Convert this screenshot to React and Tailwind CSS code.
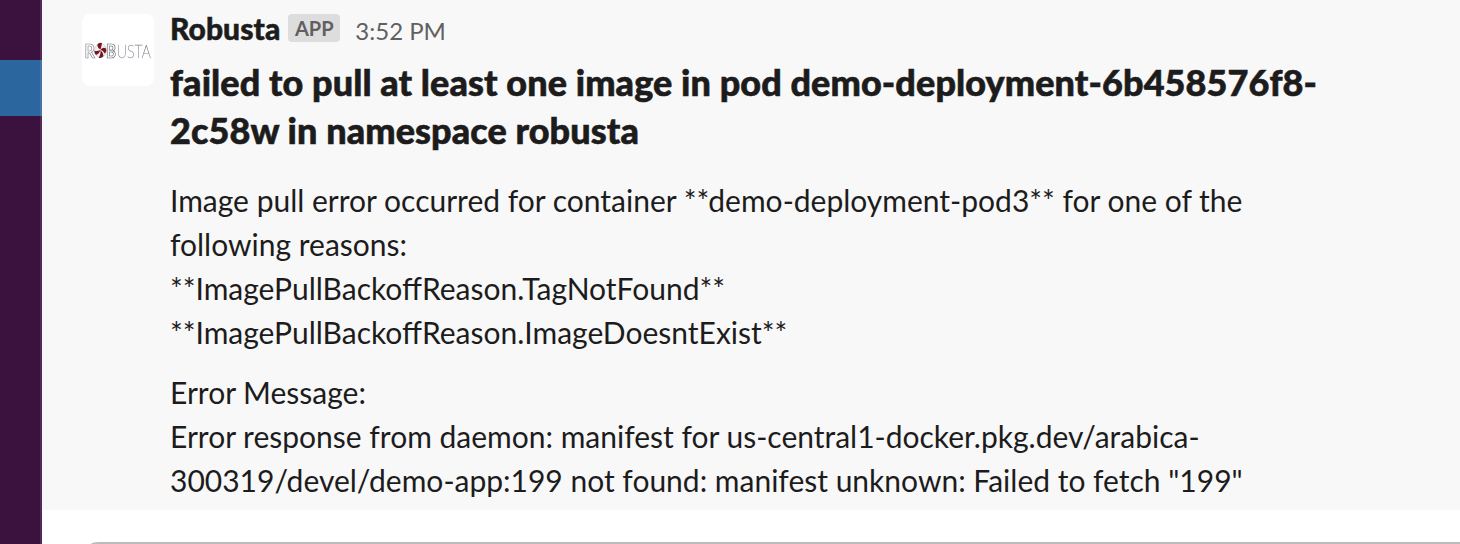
function RobustaLogo() {
  return (
    <svg viewBox="0 0 72 72" className="h-[72px] w-[72px] overflow-visible font-['Lato',sans-serif] antialiased will-change-transform" role="img" aria-label="Robusta">
      <g className="text-[18px] font-bold" fill="#ffffff" strokeWidth=".7">
        <text x="2.500" y="44" textLength="10.500" lengthAdjust="spacingAndGlyphs" stroke="#85838e">R</text>
        <text x="24" y="43.500" textLength="10" lengthAdjust="spacingAndGlyphs" stroke="#5c5968">B</text>
      </g>
      <text x="34.800" y="44" textLength="34" lengthAdjust="spacingAndGlyphs" className="text-[17px] font-thin" fill="#686672" stroke="#85838e" strokeWidth=".3">USTA</text>
      <ellipse cx="18.500" cy="36.500" rx="6" ry="7" fill="#f2edef" stroke="#c3b9bf" strokeWidth=".5" />
      <g fill="#76151f">
        <path d="M15.200 31q1.500-3 4.800-2-.500 3.500-1.500 6.500-3-1.500-3.300-4.500z" />
        <path d="M18.500 35.500q3-3 5.500-1 1 3-1.300 5-1.200-2.500-4.200-4z" />
        <path d="M18.500 36q3 3 3 6-2 2.800-5 1.800 2.500-3 2-7.800z" />
        <path d="M18.500 36q-1.300 4-4.500 5-2-1.500-1.500-4.300 3 .800 6-.700z" />
      </g>
    </svg>
  );
}

export default function App() {
  return (
    <div className="flex h-[544px] w-[1460px] overflow-hidden bg-white font-['Lato',sans-serif] text-[#1d1c1d]">
      <aside className="w-[42px] shrink-0 bg-[#3b123e] pt-[60px] shadow-[inset_-2px_0_0_#552b56]">
        <div className="h-14 w-[42px] border-r-2 border-[#4474a8] bg-[#2c669f]" />
      </aside>
      <main className="flex min-w-0 flex-1 flex-col">
        <section className="flex h-[510px] shrink-0 gap-4 bg-[#f8f8f8] pl-10">
          <div className="mt-[14px] h-[72px] w-[72px] shrink-0 rounded-lg bg-white"><RobustaLogo /></div>
          <div className="whitespace-nowrap">
            <header className="flex h-[58px] items-center">
              <span className="-mt-px text-[30px] font-black tracking-[0.06px] [-webkit-text-stroke:0.5px_#1d1c1d]">Robusta</span>
              <span className="mb-0.5 ml-2 flex h-7 w-[52px] items-center justify-center rounded bg-[#dddddd] text-[20px] font-bold text-[#616061]">APP</span>
              <time className="mt-[3px] ml-[15px] text-[24px] text-[#616061]">3:52 PM</time>
            </header>
            <h1 className="text-[36px] leading-[48px] font-black tracking-[0.09px] [-webkit-text-stroke:0.6px_#1d1c1d]">failed to pull at least one image in pod demo-deployment-6b458576f8-<br />2c58w in namespace robusta</h1>
            <p className="mt-6 text-[30px] leading-[44px]">Image pull error occurred for container **demo-deployment-pod3** for one of the<br />following reasons:<br />**ImagePullBackoffReason.TagNotFound**<br />**ImagePullBackoffReason.ImageDoesntExist**</p>
            <p className="mt-4 text-[30px] leading-[44px]">Error Message:<br />Error response from daemon: manifest for us-central1-docker.pkg.dev/arabica-<br />300319/devel/demo-app:199 not found: manifest unknown: Failed to fetch "199"</p>
          </div>
        </section>
        <div className="mt-8 -mr-5 ml-10 h-20 shrink-0 rounded-2xl border-2 border-[#bbbbbb] bg-white" />
      </main>
    </div>
  );
}
